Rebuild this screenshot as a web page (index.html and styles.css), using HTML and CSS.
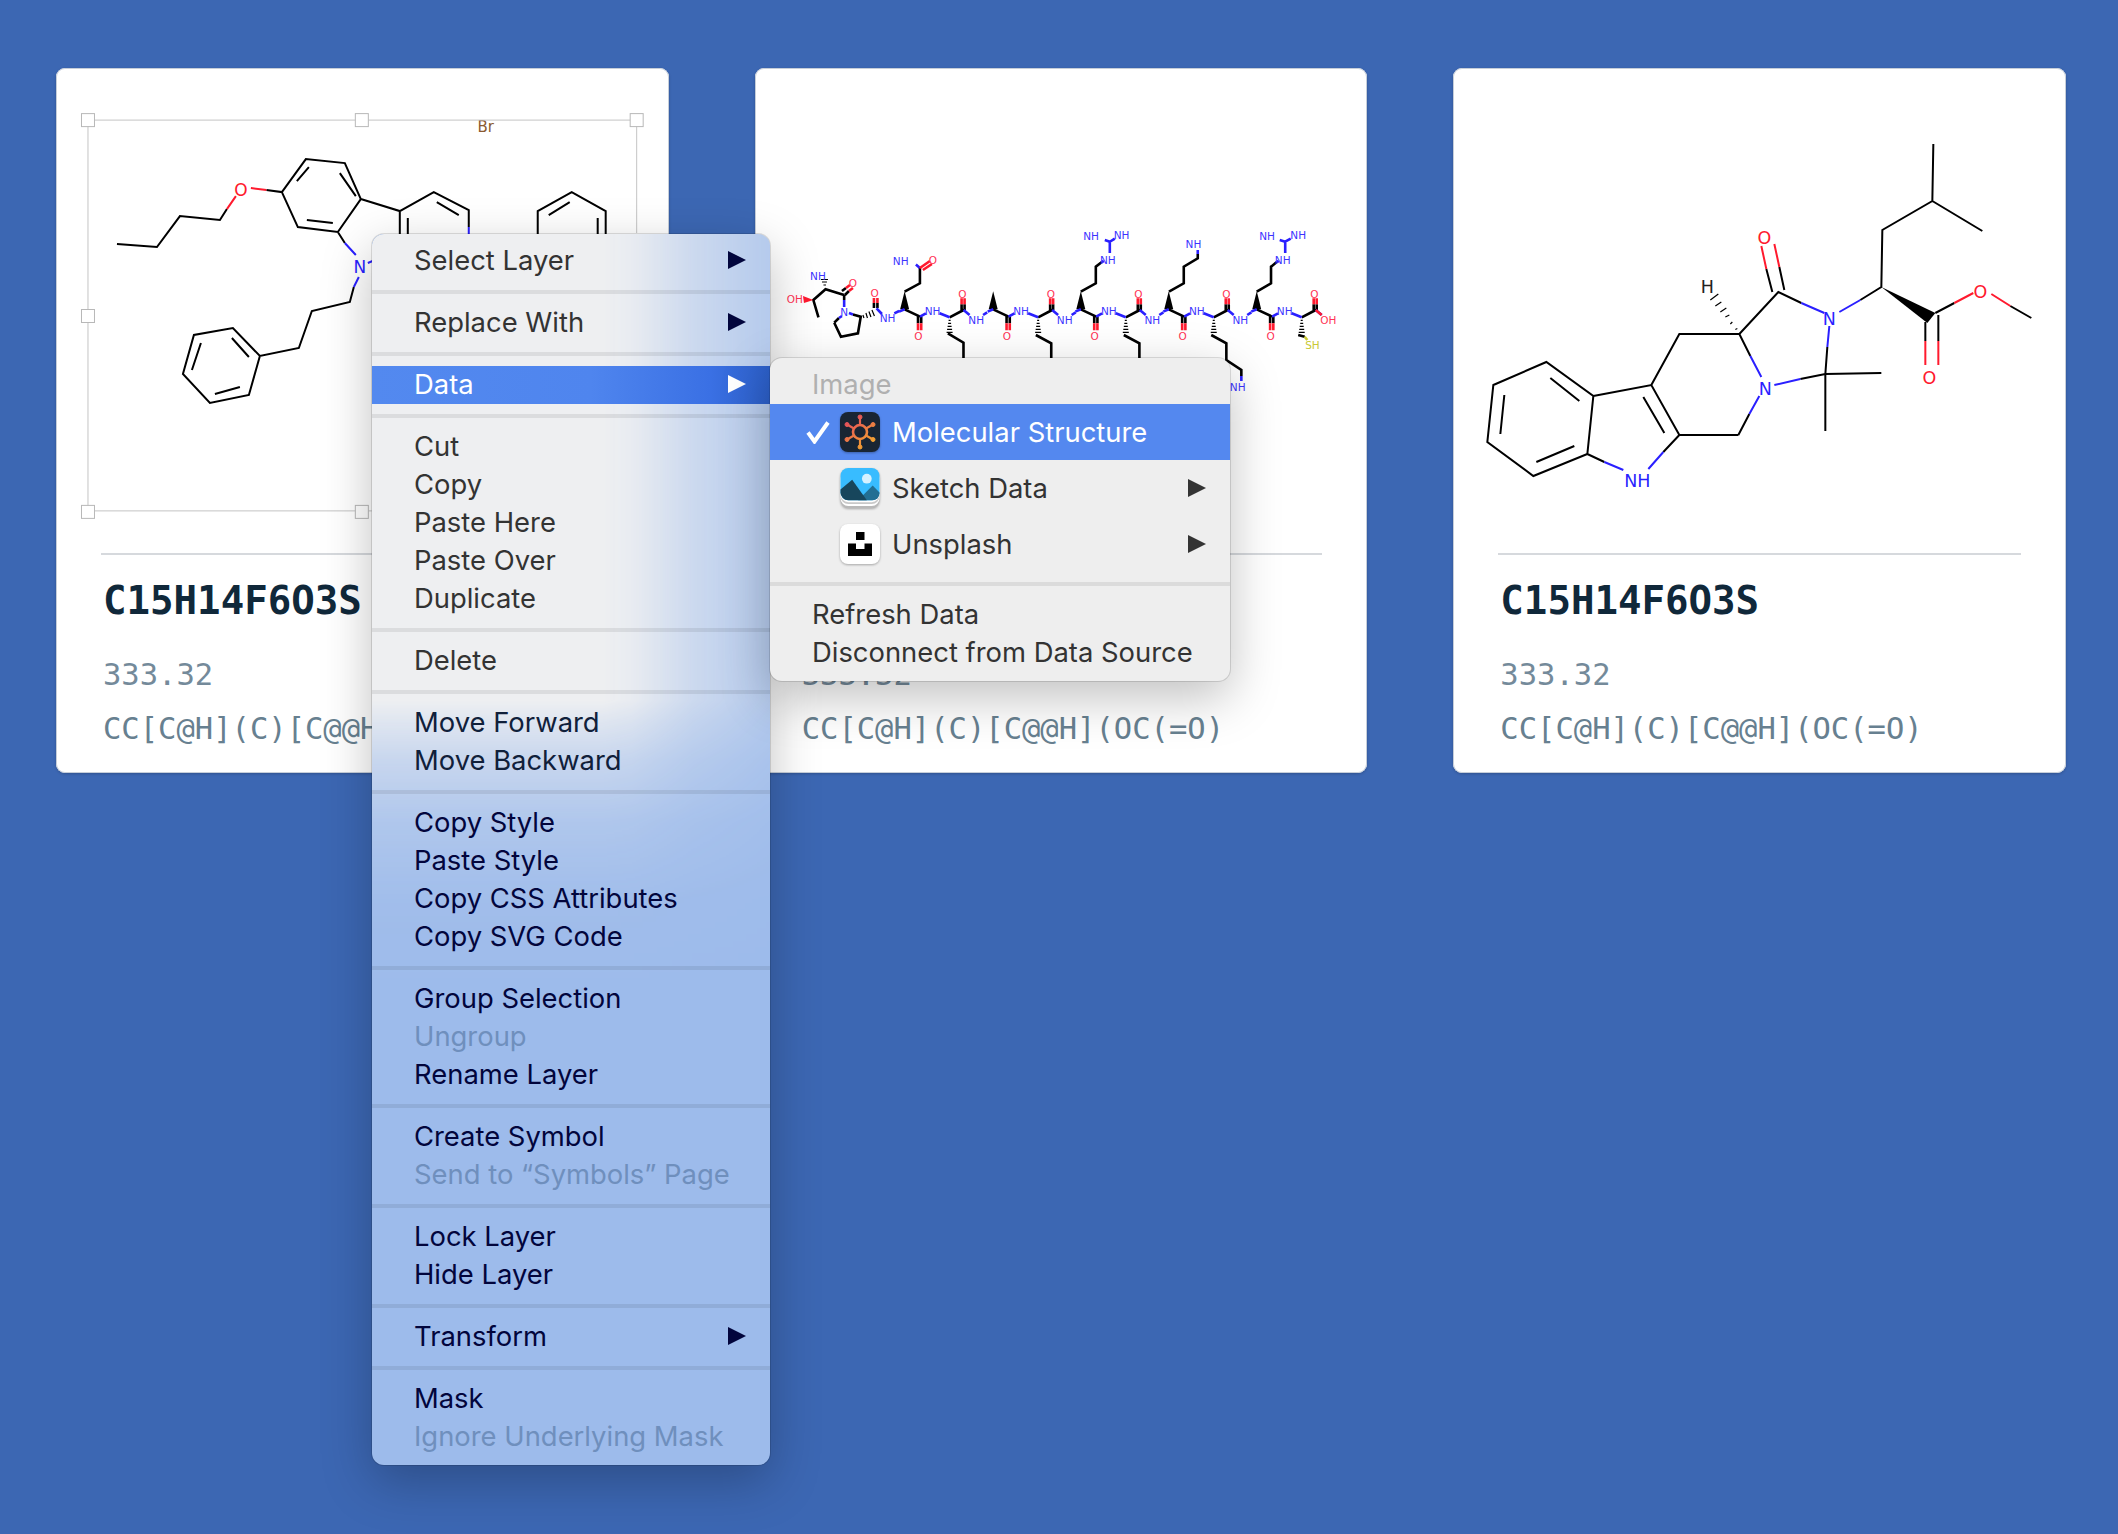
FILE: index.html
```html
<!DOCTYPE html>
<html lang="en">
<head>
  <meta charset="UTF-8" />
  <title>Molecules</title>
  <link rel="stylesheet" href="styles.css">
</head>
<body>
  <div class="cards">

    <div class="card">
      <svg class="mol" viewBox="56 68 613 485">
        <path class="bond" d="M117 244L157 247L180 216L220 220L227 209M266.5 190L282 192L306 159L345 163L361 199L338 232L298 227L282 192M297 181L309 167M340 173L356 196M307 220L333 223M361 199L400 211L434 192L469 210V227M469 236V250L434 270L400 250V211M408 218V234M437 202L459 215M538 250V211L572 192L606 211V250L572 270L538 250M549 215L570 202M598 218V234M338 232L345 243M354 287L350 302L312 311L299 348L260 356L233 328L194 335L183 374L210 403L249 395L260 356M232 338L249 357M201 343L192 370M215 394L240 387" />
        <path class="bond blue" d="M345 243L356 255M359 277L354 287M368 263L380 258M469 227V236" />
        <path class="bond red" d="M227 209L236 196M251 188L266.5 190" />
        <text class="atom red-text lg" x="241" y="196">O</text>
        <text class="atom blue-text lg" x="360" y="273">N</text>
        <text class="atom br" x="486" y="132">Br</text>
        <path class="sel-line" d="M88 120H637V233M88 120V512M88 511H372" />
        <rect class="handle" x="81.5" y="113.5" width="13" height="13" />
        <rect class="handle" x="355.5" y="113.5" width="13" height="13" />
        <rect class="handle" x="630.5" y="113.5" width="13" height="13" />
        <rect class="handle" x="81.5" y="309.5" width="13" height="13" />
        <rect class="handle" x="81.5" y="505.5" width="13" height="13" />
        <rect class="handle" x="355.5" y="505.5" width="13" height="13" />
      </svg>
      <div class="card-body">
        <h3>C15H14F6O3S</h3>
        <p class="mass">333.32</p>
        <p class="smiles">CC[C@H](C)[C@@H](OC(=O)</p>
      </div>
    </div>

    <div class="card">
      <svg class="mol peptide" viewBox="755 68 613 485">
        <defs>
          <g id="pep">
            <polygon points="0,-18 -4.5,0 4.5,0" />
            <path class="bond" d="M0 0L15.4 7.3M13.4 7.3V14M16.6 7.3V14M45 8L59 .7M57 .7V-5M60 .7V-5" />
            <path class="bond thin" d="M44 11H46M43.5 14H46.5M43 17H47M42.5 20H47.5M42 23H48" />
            <path class="bond red" d="M13.4 14V21M16.6 14V21M57 -5V-11M60 -5V-11" />
            <path class="bond blue" d="M-5.5 2.3L0 0M15.4 7.3L21.3 4M35 4L45 8M59 .7L65 5.7" />
          </g>
        </defs>
        <use href="#pep" x="904.7" y="309.3" />
        <use href="#pep" x="993.3" y="309.3" />
        <use href="#pep" x="1081" y="309.3" />
        <use href="#pep" x="1169" y="309.3" />
        <use href="#pep" x="1257" y="309.3" />

        <path class="bond" d="M834.3 322.7L841 336.7L858 333.3L860.8 316.7L853 314.5M834.3 322.7L839 318M874 308V303M877.5 308V303M844.2 295L825.6 289.3L813.4 300L818.5 317.3M844.2 295V300M842 291L846 288M845 295L849 291M904.7 291.7L920 283.3V268M1081 291.7L1096 283.3V266.7L1102 262M1169.2 291.7L1184 283.3V266.7L1198 258.3V254M1257 291.7L1271.3 283.3V266.7L1277 262M948 333.3L963.6 342.7V360M1036 335L1051.4 343.3V360M1124 335L1139.6 343.3V360M1211.5 335L1226.6 343.3V360L1241.6 370V376M1298.5 335L1305 336.7" />
        <path class="bond thin" d="M863 315L864 318M866 313L867.5 318M869 311.5L871 317M872 310L874.5 316M823.5 285H826M822 282H827M821 279.5H828" />
        <path class="bond blue" d="M983.2 315L987.3 312.3M1071.8 315L1075.9 312.3M1159.500 315L1163.600 312.3M1247.500 315L1251.600 312.3M839 318L842 316M849 313L853 314.5M876.6 308.3L882 314M894.4 313.3L899.2 311M844.2 300V307M920 268L916 264.5M1102 262L1104 261M1110 253V241.7M1110 241.7L1115 238.5M1110 241.7L1105 240M1198 254V250M1277 262L1279 261M1285.5 253V241.7M1285.5 241.7L1291 238.5M1285.5 241.7L1280 240M1241.6 376V381" />
        <path class="bond red" d="M874 303V298M877.5 303V298M846 288L850 285M849 291L853 288M920 268L930 261M923 270L932 264M1316 310L1322 315" />
        <path class="bond yellow" d="M1305 336.7L1307.6 340" />
        <polygon class="red-fill" points="813.4,300 803,296 804,303" />

        <g class="tiny">
          <text class="atom red-text" x="794.8" y="302.6">OH</text>
          <text class="atom blue-text" x="818" y="279.6">NH</text>
          <text class="atom red-text" x="853" y="287">O</text>
          <text class="atom blue-text" x="844.2" y="316">N</text>
          <text class="atom red-text" x="874.7" y="297">O</text>
          <text class="atom blue-text" x="887.7" y="322.3">NH</text>
          <text class="atom blue-text" x="900.8" y="264.6">NH</text>
          <text class="atom red-text" x="933" y="264.3">O</text>

          <text class="atom red-text" x="918.5" y="339.6">O</text>
          <text class="atom blue-text" x="932.7" y="314.6">NH</text>
          <text class="atom red-text" x="962.4" y="297.6">O</text>
          <text class="atom blue-text" x="976.3" y="323.6">NH</text>

          <text class="atom red-text" x="1007.1" y="339.6">O</text>
          <text class="atom blue-text" x="1021.3" y="314.6">NH</text>
          <text class="atom red-text" x="1051" y="297.6">O</text>
          <text class="atom blue-text" x="1064.9" y="323.6">NH</text>

          <text class="atom red-text" x="1094.8" y="339.6">O</text>
          <text class="atom blue-text" x="1109" y="314.6">NH</text>
          <text class="atom red-text" x="1138.7" y="297.6">O</text>
          <text class="atom blue-text" x="1152.6" y="323.6">NH</text>

          <text class="atom red-text" x="1182.8" y="339.6">O</text>
          <text class="atom blue-text" x="1197" y="314.6">NH</text>
          <text class="atom red-text" x="1226.7" y="297.6">O</text>
          <text class="atom blue-text" x="1240.6" y="323.6">NH</text>

          <text class="atom red-text" x="1270.8" y="339.6">O</text>
          <text class="atom blue-text" x="1285" y="314.6">NH</text>
          <text class="atom red-text" x="1314.7" y="297.6">O</text>
          <text class="atom red-text" x="1328.6" y="323.6">OH</text>

          <text class="atom blue-text" x="1108" y="264.3">NH</text>
          <text class="atom blue-text" x="1091.3" y="239.6">NH</text>
          <text class="atom blue-text" x="1121.8" y="239.3">NH</text>
          <text class="atom blue-text" x="1193.7" y="247.9">NH</text>
          <text class="atom blue-text" x="1283" y="264.3">NH</text>
          <text class="atom blue-text" x="1267.3" y="239.6">NH</text>
          <text class="atom blue-text" x="1298.5" y="238.6">NH</text>
          <text class="atom blue-text" x="1238" y="391.3">NH</text>
          <text class="atom yellow-text" x="1312.8" y="348.6">SH</text>
        </g>
      </svg>
      <div class="card-body">
        <h3>C15H14F6O3S</h3>
        <p class="mass">333.32</p>
        <p class="smiles">CC[C@H](C)[C@@H](OC(=O)</p>
      </div>
    </div>

    <div class="card">
      <svg class="mol" viewBox="1454 68 612 485">
        <path class="bond" d="M1494 385L1547 362L1594 396L1588 454L1534 476L1488 442ZM1551 378L1580 401M1505 395L1501 434M1537 462L1575 446M1594 396L1652 385L1680 435L1739 435M1644 397L1665 433M1652 385L1680 334L1740 334M1588 454L1605 462M1680 435L1664 452M1740 334L1751 356M1739 435L1750 414M1801 379L1826 374L1882 373M1826 374V431M1826 374L1828 347M1740 334L1779 292L1802 303M1773 292L1767 269M1785 290L1780 267M1861 300L1882 287L1883 230L1933 201L1934 144M1933 201L1983 231M1936 313L1955 303M2011 306L2032 318M1926 322V341M1939 315V341" />
        <path class="bond blue" d="M1605 462L1624 470M1664 452L1649 469M1751 356L1762 377M1750 414L1760 396M1775 385L1801 379M1828 347L1830 326M1802 303L1825 313M1840 312L1861 300" />
        <path class="bond red" d="M1767 269L1762 246M1780 267L1775 244M1955 303L1974 293M1992 294L2011 306M1926 341V365M1939 341V365" />
        <path class="bond thin" d="M1736 329.5L1738 328.5M1731 324L1733 322M1726 317L1730 315M1721 312L1727 308M1716 306L1722 302M1711 300L1719 294" />
        <polygon points="1882,287 1936,313 1928,323" />
        <g class="big">
          <text class="atom blue-text" x="1638" y="487">NH</text>
          <text class="atom blue-text" x="1766" y="395">N</text>
          <text class="atom blue-text" x="1830" y="325">N</text>
          <text class="atom red-text" x="1765" y="244">O</text>
          <text class="atom red-text" x="1981" y="298">O</text>
          <text class="atom red-text" x="1930" y="384">O</text>
          <text class="atom" x="1708" y="293">H</text>
        </g>
      </svg>
      <div class="card-body">
        <h3>C15H14F6O3S</h3>
        <p class="mass">333.32</p>
        <p class="smiles">CC[C@H](C)[C@@H](OC(=O)</p>
      </div>
    </div>

  </div>

  <div class="menu main-menu">
    <div class="row">Select Layer<span class="arrow navy"></span></div>
    <div class="sep"></div>
    <div class="row">Replace With<span class="arrow navy"></span></div>
    <div class="sep"></div>
    <div class="row active fade">Data<span class="arrow"></span></div>
    <div class="sep"></div>
    <div class="row">Cut</div>
    <div class="row">Copy</div>
    <div class="row">Paste Here</div>
    <div class="row">Paste Over</div>
    <div class="row">Duplicate</div>
    <div class="sep"></div>
    <div class="row">Delete</div>
    <div class="sep"></div>
    <div class="row mid">Move Forward</div>
    <div class="row mid">Move Backward</div>
    <div class="sep"></div>
    <div class="row navy">Copy Style</div>
    <div class="row navy">Paste Style</div>
    <div class="row navy">Copy CSS Attributes</div>
    <div class="row navy">Copy SVG Code</div>
    <div class="sep"></div>
    <div class="row navy">Group Selection</div>
    <div class="row off">Ungroup</div>
    <div class="row navy">Rename Layer</div>
    <div class="sep"></div>
    <div class="row navy">Create Symbol</div>
    <div class="row off">Send to “Symbols” Page</div>
    <div class="sep"></div>
    <div class="row navy">Lock Layer</div>
    <div class="row navy">Hide Layer</div>
    <div class="sep"></div>
    <div class="row navy">Transform<span class="arrow"></span></div>
    <div class="sep"></div>
    <div class="row navy">Mask</div>
    <div class="row off">Ignore Underlying Mask</div>
  </div>

  <div class="menu sub-menu">
    <div class="row off-light">Image</div>
    <div class="row tall active">
      <svg class="check" viewBox="0 0 24 24">
        <path d="M2 12.500L8.500 21.500L22 2.500" />
      </svg>
      <svg class="app-icon" viewBox="0 0 40 40">
        <defs>
          <linearGradient id="molGrad" gradientUnits="userSpaceOnUse" x1="6" y1="6" x2="28" y2="36">
            <stop offset="0" stop-color="#e2475f" />
            <stop offset="1" stop-color="#f5a82e" />
          </linearGradient>
        </defs>
        <rect width="40" height="40" rx="8" fill="#192533" />
        <g stroke="url(#molGrad)" fill="url(#molGrad)">
          <circle cx="20" cy="20" r="7" fill="none" stroke-width="2.6" />
          <path stroke-width="2.2" d="M20 13V5M20 27V35M14 16.500L7 12.500M26 16.500L33 12.500M14 23.500L7 27.500M26 23.500L33 27.500" />
          <circle cx="20" cy="5" r="2" />
          <circle cx="20" cy="35" r="2" />
          <circle cx="7" cy="12.500" r="2" />
          <circle cx="33" cy="12.500" r="2" />
          <circle cx="7" cy="27.500" r="2" />
          <circle cx="33" cy="27.500" r="2" />
        </g>
      </svg>
      Molecular Structure
    </div>
    <div class="row tall">
      <svg class="app-icon" viewBox="0 0 40 41">
        <rect y="6" width="40" height="35" rx="8" fill="#b9b9b9" />
        <rect y="5" width="40" height="34" rx="8" fill="#fff" />
        <rect y="3" width="40" height="34" rx="8" fill="#c9c9c9" />
        <rect y="2" width="40" height="33" rx="8" fill="#fff" />
        <rect width="40" height="33" rx="8" fill="#38bcff" />
        <circle cx="27" cy="11" r="5" fill="#d6f1ff" />
        <path fill="#236f93" d="M18 33L33 18L40 25V26A7 7 0 0 1 33 33Z" />
        <path fill="#17465c" d="M0 22L12 12L27 33H8A8 8 0 0 1 0 25Z" />
      </svg>
      Sketch Data<span class="arrow"></span>
    </div>
    <div class="row tall">
      <svg class="app-icon" viewBox="0 0 40 40">
        <rect width="40" height="40" rx="8" fill="#fff" />
        <path fill="#000" d="M16 8H24.500V16H16ZM8 19.500H16V25H24.500V19.500H32V32H8Z" />
      </svg>
      Unsplash<span class="arrow"></span>
    </div>
    <div class="sep"></div>
    <div class="row">Refresh Data</div>
    <div class="row">Disconnect from Data Source</div>
  </div>
</body>
</html>
```

FILE: styles.css
```css
* {
  box-sizing: border-box;
  margin: 0;
  padding: 0;
}

html, body {
  height: 100%;
}

body {
  background: #3c67b3;
  position: relative;
  overflow: hidden;
}

.cards {
  display: grid;
  grid-template-columns: repeat(3, 1fr);
  gap: 86px;
  padding: 68px 52px 0 56px;
}

.card {
  height: 705px;
  background: #fff;
  border-radius: 9px;
  box-shadow: inset 0 0 0 1px #c6ced9, 0 1px 3px rgba(0, 0, 0, 0.2);
}

.mol {
  display: block;
  width: 100%;
  height: 485px;
  overflow: visible;
}

.bond {
  fill: none;
  stroke: #000;
  stroke-width: 2;
}

.peptide .bond { stroke-width: 2.6; }
.bond.thin, .peptide .bond.thin { stroke-width: 1.2; }
.bond.blue { stroke: #2a1fff; }
.bond.red { stroke: #ff1a2e; }
.bond.yellow { stroke: #c8c832; }
.red-fill { fill: #ff1a2e; }

.atom {
  font-family: "DejaVu Sans", sans-serif;
  text-anchor: middle;
  fill: #222;
}

.lg { font-size: 17px; }
.big .atom { font-size: 17.5px; }
.tiny .atom { font-size: 10.5px; }
.red-text { fill: #ff1a2e; }
.blue-text { fill: #2a1fff; }
.tiny .red-text { fill: #ff3355; }
.tiny .blue-text { fill: #3c33ff; }
.tiny .yellow-text { fill: #c8c832; }

.br {
  font-size: 15px;
  fill: #8a5a30;
}

.sel-line {
  fill: none;
  stroke: #c4c4c4;
  stroke-width: 1;
}

.handle {
  fill: #fff;
  stroke: #b8b8b8;
  stroke-width: 1;
}

.card-body {
  margin: 0 45px;
  border-top: 2px solid #d6d9dd;
  font-family: "DejaVu Sans Mono", monospace;
}

.card-body h3 {
  margin: 24px 0 0 2px;
  font-size: 39.1px;
  line-height: 44px;
  color: #10283a;
}

.mass {
  margin: 32px 0 0 2px;
  font-size: 30.5px;
  line-height: 40px;
  color: #748a9a;
}

.smiles {
  margin: 14px 0 0 2px;
  font-size: 30.5px;
  line-height: 40px;
  color: #678090;
}

.menu {
  position: absolute;
  padding: 8px 0 9px;
  border-radius: 12px;
  box-shadow: 0 0 0 1px rgba(0, 0, 0, 0.12), 0 16px 50px rgba(0, 0, 0, 0.25);
  font-family: Inter, "Liberation Sans", sans-serif;
  font-size: 27.4px;
  color: #333;
}

.main-menu {
  left: 372px;
  top: 234px;
  width: 398px;
  background: #9dbbeb;
}

/* light part of the menu, where the white card shows through it */
.main-menu::before {
  content: "";
  position: absolute;
  inset: 0;
  border-radius: inherit;
  background: #eeeff1;
  -webkit-mask-image:
    linear-gradient(to right, #000 230px, rgba(0, 0, 0, 0.93) 260px, rgba(0, 0, 0, 0.58) 321px, rgba(0, 0, 0, 0.3) 398px),
    linear-gradient(to bottom, #000 466px, rgba(0, 0, 0, 0.81) 488px, rgba(0, 0, 0, 0.53) 526px, rgba(0, 0, 0, 0.23) 588px, rgba(0, 0, 0, 0.06) 666px, transparent 760px);
  mask-image:
    linear-gradient(to right, #000 230px, rgba(0, 0, 0, 0.93) 260px, rgba(0, 0, 0, 0.58) 321px, rgba(0, 0, 0, 0.3) 398px),
    linear-gradient(to bottom, #000 466px, rgba(0, 0, 0, 0.81) 488px, rgba(0, 0, 0, 0.53) 526px, rgba(0, 0, 0, 0.23) 588px, rgba(0, 0, 0, 0.06) 666px, transparent 760px);
  -webkit-mask-composite: source-in;
  mask-composite: intersect;
}

.main-menu > * {
  position: relative;
}

.sub-menu {
  left: 770px;
  top: 358px;
  width: 460px;
  background: #eeeeee;
}

.row {
  display: flex;
  align-items: center;
  height: 38px;
  padding: 0 24px 2px 42px;
  white-space: nowrap;
}

.row.tall {
  height: 56px;
  padding-bottom: 0;
  position: relative;
}

.sep {
  height: 4px;
  margin: 10px 0;
  background: rgba(0, 0, 0, 0.08);
}

.mid { color: #10203a; }
.navy { color: #02053c; }
.off { color: #6f8fbd; }
.off-light { color: #b0b0b0; }

.active {
  background: #5488ef;
  color: #fff;
}

.active.fade {
  background: linear-gradient(to right, #5389ef 0%, #4f85ee 55%, #3a70e4 85%, #2c5fc8 100%);
}

.arrow {
  margin-left: auto;
  width: 0;
  height: 0;
  border-left: 18px solid currentColor;
  border-top: 9.5px solid transparent;
  border-bottom: 9.5px solid transparent;
}

.sub-menu .row.tall {
  padding-left: 70px;
}

.check {
  position: absolute;
  left: 36px;
  width: 24px;
  height: 24px;
  fill: none;
  stroke: #fff;
  stroke-width: 4;
}

.app-icon {
  width: 40px;
  height: 40px;
  margin-right: 12px;
  overflow: visible;
  filter: drop-shadow(0 1px 1px rgba(0, 0, 0, 0.3));
}
```
